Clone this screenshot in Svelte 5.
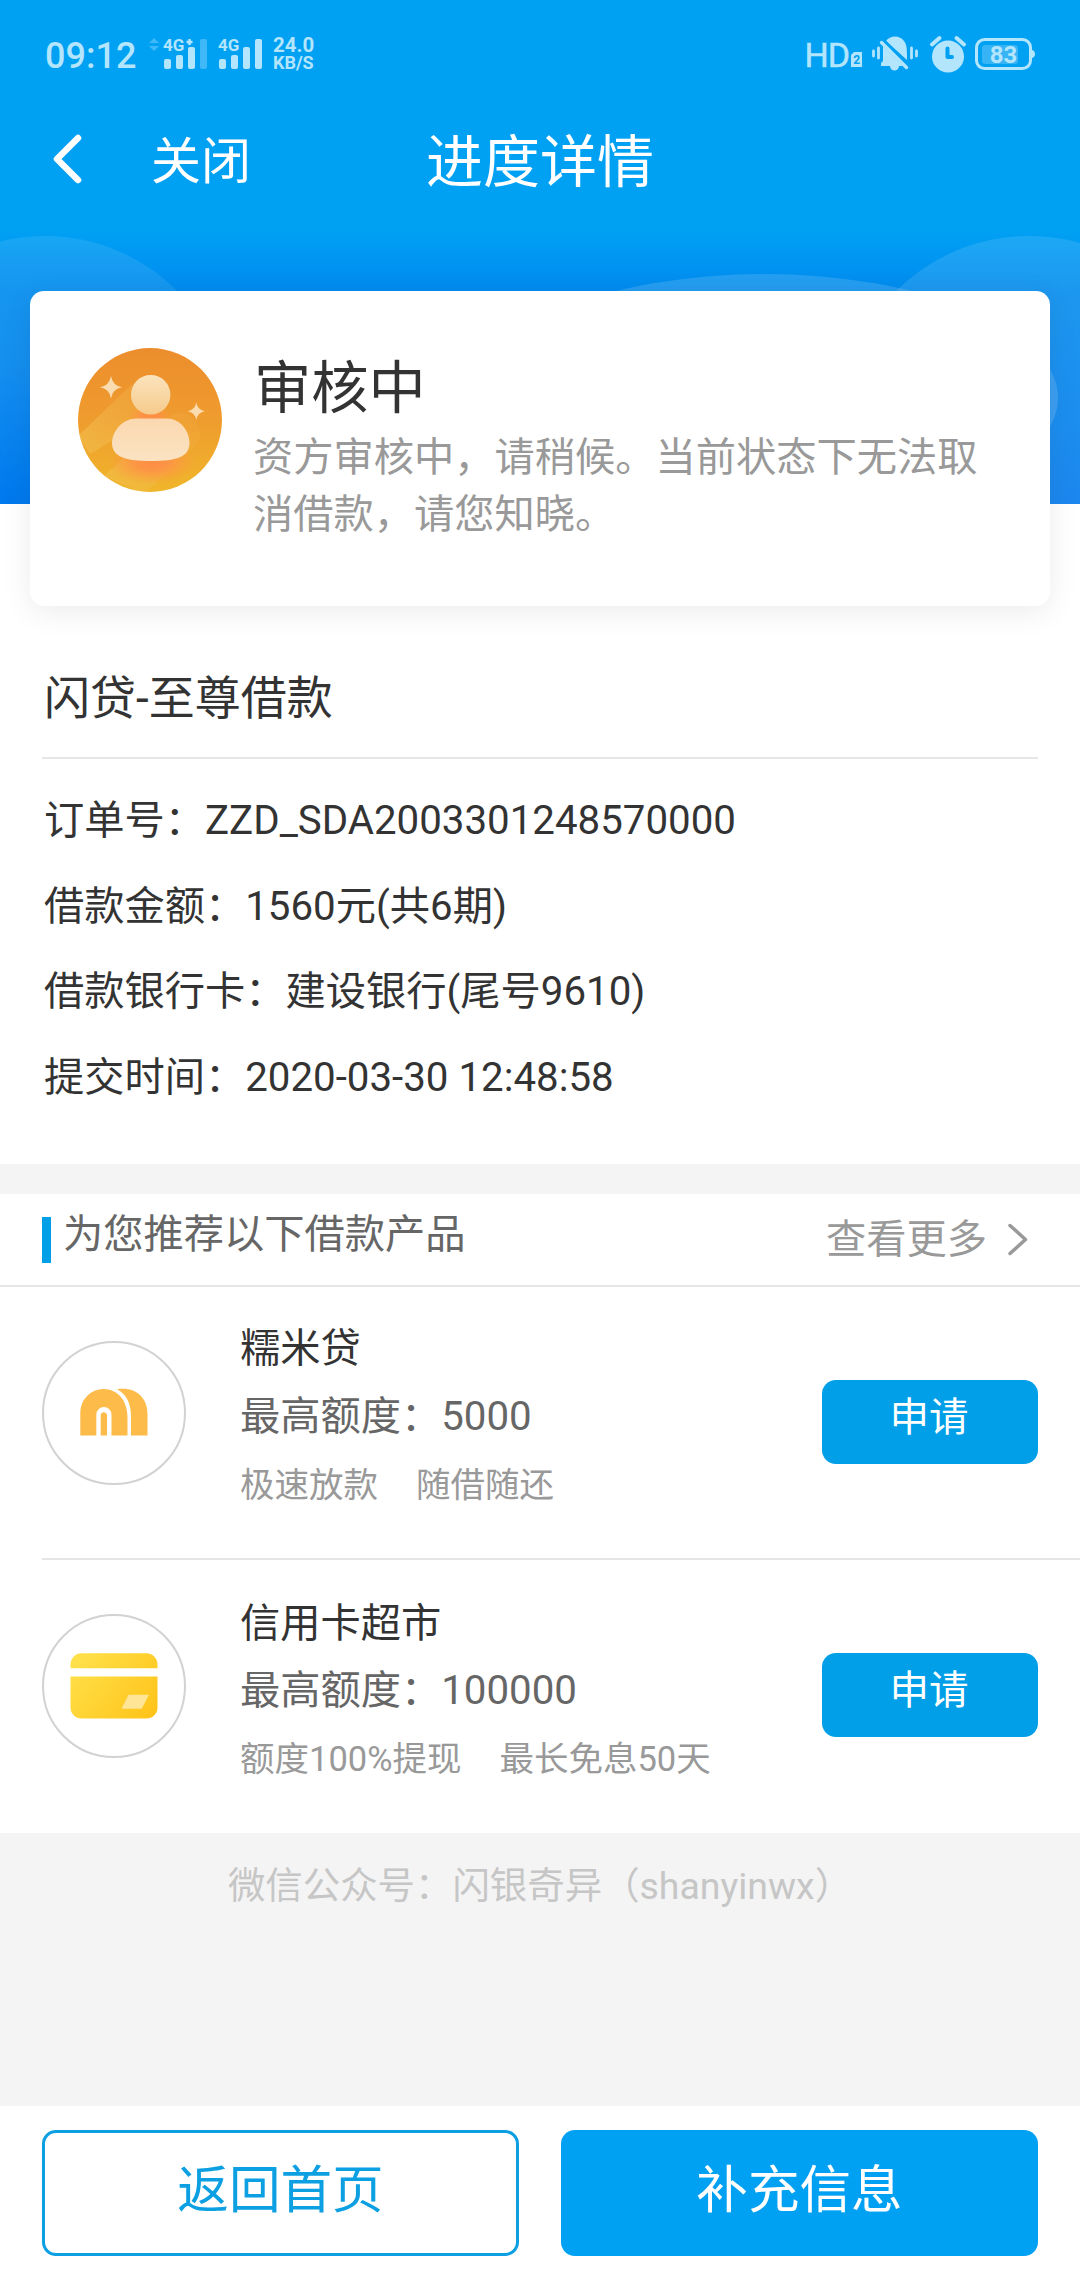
<script>
  const details = [
    { label: '订单号', value: 'ZZD_SDA2003301248570000' },
    { label: '借款金额', value: '1560元(共6期)' },
    { label: '借款银行卡', value: '建设银行(尾号9610)' },
    { label: '提交时间', value: '2020-03-30 12:48:58' }
  ];

  const products = [
    { icon: 'rice', name: '糯米贷', limit: '5000', tags: ['极速放款', '随借随还'] },
    { icon: 'card', name: '信用卡超市', limit: '100000', tags: ['额度100%提现', '最长免息50天'] }
  ];

  // Signal bars: x offset and top of each bar
  const bars = [
    [0, 20],
    [12, 16],
    [24, 8],
    [36, 0]
  ];
</script>

<main>
  <header>
    <svg class="waves" viewBox="0 0 1080 504" aria-hidden="true">
      <defs>
        <linearGradient id="fadeDown" x1="0" y1="0" x2="0" y2="1">
          <stop offset="0" stop-color="#fff" stop-opacity=".09" />
          <stop offset=".35" stop-color="#fff" stop-opacity=".08" />
          <stop offset=".7" stop-color="#fff" stop-opacity="0" />
        </linearGradient>
      </defs>
      <circle cx="45" cy="422" r="186" fill="url(#fadeDown)" />
      <circle cx="1029" cy="424" r="188" fill="#fff" fill-opacity=".11" />
      <ellipse cx="764" cy="398" rx="294" ry="124" fill="#fff" fill-opacity=".14" />
    </svg>

    <div class="status">
      <span class="time">09:12</span>
      <svg class="arrows" width="10" height="14" viewBox="0 0 10 14">
        <path d="M5 0l5 5H0zM5 13l5-5H0z" fill="currentColor" />
      </svg>
      <svg class="signal" width="44" height="32" viewBox="0 0 44 32">
        {#each bars as [x, top], i}
          <rect {x} y={top + 1} width="7" height={30 - top} rx="2" fill="currentColor" opacity={i === 3 ? 0.35 : 1} />
        {/each}
        <text x="-1" y="13">4G</text>
        <path d="M25.500 1v6M22.500 4h6" stroke="currentColor" stroke-width="2.500" />
      </svg>
      <svg class="signal second" width="44" height="32" viewBox="0 0 44 32">
        {#each bars as [x, top]}
          <rect {x} y={top + 1} width="7" height={30 - top} rx="2" fill="currentColor" />
        {/each}
        <text x="-1" y="13">4G</text>
      </svg>
      <div class="speed"><span>24.0</span><span class="unit">KB/S</span></div>

      <div class="right">
        <span class="hd">HD</span>
        <svg class="sim" width="11" height="15" viewBox="0 0 11 15">
          <path d="M3 0h8v15H0V3z" fill="currentColor" />
          <text x="2.200" y="12">2</text>
        </svg>
        <svg class="bell" width="46" height="36" viewBox="0 0 46 36">
          <path d="M1.500 15v5M6.500 12v10M39.500 12v10M44.500 15v5" stroke="currentColor" stroke-width="2.800" stroke-linecap="round" />
          <path d="M14 5C18-1 28-1 32 5c3 4 3 8 3 19z" fill="currentColor" />
          <path d="M11 10l20 20h-4a4.500 4.500 0 0 1-9 0H9v-3l2-2z" fill="currentColor" />
          <path d="M9.500 6.500L34.500 31.500" stroke="currentColor" stroke-width="3.400" stroke-linecap="round" />
          <path d="M12.500 4.500L37 29" stroke="#00a0f3" stroke-width="2" />
        </svg>
        <svg class="alarm" width="36" height="37" viewBox="0 0 36 37">
          <circle cx="18" cy="20.500" r="16" fill="currentColor" />
          <path d="M2 8.500L9.500 2M34 8.500L26.500 2" stroke="currentColor" stroke-width="4" stroke-linecap="round" />
          <path d="M17.500 12.500V21H22" fill="none" stroke="#00a0f3" stroke-width="4" stroke-linecap="round" stroke-linejoin="round" />
        </svg>
        <svg class="battery" width="60" height="34" viewBox="0 0 60 34">
          <rect x="1.500" y="2.500" width="54" height="29" rx="8" fill="none" stroke="currentColor" stroke-width="3" />
          <path d="M57 13c4 1 4 7 0 8z" fill="currentColor" />
          <rect x="7" y="8" width="36" height="19" rx="3" fill="currentColor" opacity=".3" />
          <text x="28.500" y="25.500">83</text>
        </svg>
      </div>
    </div>

    <nav>
      <div class="back">
        <svg width="32" height="52" viewBox="0 0 32 52">
          <path d="M26 5L5 26L26 47" fill="none" stroke="#fff" stroke-width="6.500" stroke-linecap="round" stroke-linejoin="round" />
        </svg>
        <span>关闭</span>
      </div>
      <h1>进度详情</h1>
    </nav>
  </header>

  <section class="card">
    <svg class="avatar" width="144" height="144" viewBox="0 0 144 144">
      <defs>
        <linearGradient id="orange" x1="0" y1="0" x2="0" y2="1">
          <stop offset="0" stop-color="#ec8d2d" />
          <stop offset=".5" stop-color="#ef9c2e" />
          <stop offset="1" stop-color="#f0b62b" />
        </linearGradient>
        <linearGradient id="beam" gradientUnits="userSpaceOnUse" x1="10" y1="110" x2="120" y2="60">
          <stop offset="0" stop-color="#f3c455" stop-opacity=".5" />
          <stop offset="1" stop-color="#f3b04a" stop-opacity=".15" />
        </linearGradient>
        <linearGradient id="head" x1="0" y1="0" x2="0" y2="1">
          <stop offset="0" stop-color="#fbe3bd" />
          <stop offset="1" stop-color="#f6cb8c" />
        </linearGradient>
        <linearGradient id="torso" x1="0" y1="0" x2="0" y2="1">
          <stop offset="0" stop-color="#fbd8b0" />
          <stop offset="1" stop-color="#fae3c2" />
        </linearGradient>
        <radialGradient id="glow">
          <stop offset="0" stop-color="#ff8a45" stop-opacity=".95" />
          <stop offset=".4" stop-color="#ff8f48" stop-opacity=".8" />
          <stop offset="1" stop-color="#ff9a45" stop-opacity="0" />
        </radialGradient>
        <clipPath id="disc"><circle cx="72" cy="72" r="72" /></clipPath>
      </defs>
      <g clip-path="url(#disc)">
        <rect width="144" height="144" fill="url(#orange)" />
        <path d="M0 88L54 36L86 62L12 106z" fill="url(#beam)" />
        <path d="M26 128L92 68C108 56 130 78 119 96L66 146z" fill="url(#beam)" />
        <ellipse cx="72" cy="68" rx="22" ry="11" fill="url(#glow)" />
        <ellipse cx="74" cy="114" rx="44" ry="22" fill="url(#glow)" />
      </g>
      <circle cx="72.700" cy="46.700" r="19.700" fill="url(#head)" />
      <path d="M58 70.500H89C102 70.500 111.500 83 111.500 95C111.500 109 98 113 73 113S34 109 34 95C34 83 45 70.500 58 70.500z" fill="url(#torso)" />
      <path d="M33 28Q34.500 37.500 44 39.300Q34.500 41 33 50.500Q31.500 41 22 39.300Q31.500 37.500 33 28z" fill="#fbdcb0" />
      <path d="M118.300 54.500Q119.500 62 127 63.300Q119.500 64.600 118.300 72Q117 64.600 109.500 63.300Q117 62 118.300 54.500z" fill="#fbdcb0" />
    </svg>
    <div class="state">
      <h2>审核中</h2>
      <p>资方审核中，请稍候。当前状态下无法取消借款，请您知晓。</p>
    </div>
  </section>

  <section class="order">
    <h3>闪贷-至尊借款</h3>
    <ul>
      {#each details as row}
        <li>{row.label}：{row.value}</li>
      {/each}
    </ul>
  </section>

  <section class="recommend">
    <div class="recommend-head">
      <i class="mark"></i>
      <span class="caption">为您推荐以下借款产品</span>
      <span class="more">查看更多</span>
      <svg class="chevron" width="22" height="36" viewBox="0 0 22 36">
        <path d="M3 3.500L18.500 17.500L3 31.500" fill="none" stroke="#999" stroke-width="3.500" stroke-linecap="round" stroke-linejoin="round" />
      </svg>
    </div>

    {#each products as product}
      <article>
        <div class="logo">
          {#if product.icon === 'rice'}
            <svg viewBox="0 0 144 144">
              <path d="M38.300 94.500V71.500A23.500 23.500 0 0 1 61.500 48C76 48 85.500 60 85.500 76V94.500H69.500V73.500A7.600 7.600 0 0 0 54.300 73.500V94.500z" fill="#fdbb4a" />
              <path d="M58.700 94.500V74A3.200 3.200 0 0 1 65 74V94.500z" fill="#fdbb4a" />
              <path d="M75 48.300C93 45.500 105.500 56 105.500 73V94.500H89V75C89 62 84 53 75 48.300z" fill="#fdbb4a" />
            </svg>
          {:else}
            <svg viewBox="0 0 144 144">
              <defs>
                <linearGradient id="gold" gradientUnits="userSpaceOnUse" x1="35" y1="45" x2="108" y2="104">
                  <stop offset="0" stop-color="#ffe049" />
                  <stop offset="1" stop-color="#ffc41a" />
                </linearGradient>
              </defs>
              <path d="M28.500 54.300V50A11 11 0 0 1 39.500 39.300H104.500A11 11 0 0 1 115.500 50V54.300z" fill="url(#gold)" />
              <path d="M28.500 62.500H115.500V93.500A11 11 0 0 1 104.500 104.500H39.500A11 11 0 0 1 28.500 93.500z" fill="url(#gold)" />
              <path d="M86.500 80.700H107L99.700 94.700H79.500z" fill="#ffe595" />
            </svg>
          {/if}
        </div>
        <div class="info">
          <h4>{product.name}</h4>
          <p class="limit">最高额度：{product.limit}</p>
          <p class="tags">
            {#each product.tags as tag}
              <span>{tag}</span>
            {/each}
          </p>
        </div>
        <button class="apply">申请</button>
      </article>
    {/each}
  </section>

  <p class="wechat">微信公众号：闪银奇异（shanyinwx）</p>

  <footer>
    <button class="outline">返回首页</button>
    <button class="solid">补充信息</button>
  </footer>
</main>

<style>
  :global(body) {
    margin: 0;
    background: #f4f4f4;
  }

  main {
    display: flex;
    flex-direction: column;
    width: 1080px;
    height: 2280px;
    overflow: hidden;
    background: #f4f4f4;
    color: #333;
    font-family: Roboto, "Noto Sans CJK SC", sans-serif;
    font-size: 40.25px;
  }

  h1, h2, h3, h4, p, ul {
    margin: 0;
    padding: 0;
    font-weight: 400;
  }

  ul {
    list-style: none;
  }

  svg {
    display: block;
    flex: none;
    overflow: visible;
  }

  button {
    box-sizing: border-box;
    border: 0;
    padding: 0;
    font-family: inherit;
  }

  header {
    position: relative;
    flex: none;
    height: 504px;
    background: linear-gradient(#00a0f3 232px, #0097f2 255px, #008bee 291px, #0079ee 504px);
  }

  .waves {
    position: absolute;
    inset: 0;
    width: 1080px;
    height: 504px;
    overflow: hidden;
  }

  .status {
    position: relative;
    display: flex;
    align-items: center;
    height: 108px;
    padding: 0 45px 0 45px;
    color: #b3e5fd;
    font-weight: 500;
  }

  .time {
    width: 104px;
    font-size: 36px;
    line-height: 42px;
    padding-top: 3px;
  }

  .arrows {
    margin-bottom: 18px;
    opacity: .35;
  }

  .signal {
    margin-left: 5px;
  }

  .signal.second {
    margin-left: 11px;
  }

  .signal text {
    font-size: 17px;
    font-weight: 700;
    fill: currentColor;
  }

  .speed {
    display: flex;
    flex-direction: column;
    margin-left: 10px;
    font-size: 20.5px;
    font-weight: 700;
    line-height: 17px;
  }

  .unit {
    font-size: 18px;
  }

  .right {
    display: flex;
    align-items: center;
    margin-left: auto;
  }

  .hd {
    padding-top: 2px;
    font-size: 34px;
    font-weight: 400;
    letter-spacing: -1px;
    line-height: 40px;
    -webkit-text-stroke: .5px currentColor;
  }

  .sim {
    margin: 11px 10px 0 2px;
  }

  .sim text {
    font-size: 12px;
    font-weight: 700;
    fill: #00a0f3;
  }

  .alarm {
    margin: 0 9px 0 12px;
  }

  .battery text {
    font-size: 24px;
    font-weight: 700;
    text-anchor: middle;
    fill: currentColor;
  }

  nav {
    position: relative;
    display: grid;
    grid-template-columns: 1fr auto 1fr;
    align-items: center;
    height: 108px;
    color: #fff;
  }

  .back {
    display: flex;
    align-items: center;
    gap: 67px;
    padding-left: 52px;
    font-size: 50px;
    line-height: 60px;
  }

  .back svg {
    margin-bottom: 6px;
  }

  h1 {
    padding-top: 1px;
    font-size: 57px;
    line-height: 68px;
  }

  .order,
  .recommend {
    background: #fff;
  }

  .card {
    position: relative;
    box-sizing: border-box;
    display: flex;
    flex: none;
    gap: 32px;
    height: 315px;
    margin: -213px 30px 0;
    padding: 57px 48px 0;
    border-radius: 14px;
    background: #fff;
    box-shadow: 0 6px 30px rgba(0, 0, 0, .08);
  }

  .state {
    padding-top: 1px;
  }

  h2 {
    font-size: 57.2px;
    line-height: 80px;
  }

  .state p {
    width: 728px;
    margin-left: -1px;
    color: #999;
    line-height: 57px;
  }

  /* White panel slides up behind the status card */
  .order {
    box-sizing: border-box;
    height: 660px;
    margin-top: -102px;
    padding: 152px 42px 0;
  }

  h3 {
    box-sizing: border-box;
    height: 103px;
    padding: 12px 2px 0;
    border-bottom: 2px solid #e6e6e6;
    font-size: 46px;
    line-height: 60px;
  }

  .order ul {
    padding: 19px 2px 0;
  }

  li {
    height: 85.7px;
    line-height: 86px;
  }

  .recommend {
    margin-top: 30px;
  }

  .recommend-head {
    box-sizing: border-box;
    display: flex;
    align-items: center;
    height: 93px;
    padding: 0 51px 0 42px;
    border-bottom: 2px solid #e6e6e6;
  }

  .mark {
    width: 9px;
    height: 46px;
    background: #009fe8;
  }

  .caption {
    margin: 0 auto 10px 12px;
    color: #666;
    line-height: 50px;
  }

  .more {
    color: #999;
    line-height: 50px;
  }

  .chevron {
    margin-left: 20px;
  }

  article {
    box-sizing: border-box;
    display: flex;
    height: 271px;
    margin-left: 42px;
    padding-right: 42px;
  }

  article + article {
    height: 275px;
    border-top: 2px solid #e6e6e6;
  }

  .logo {
    box-sizing: border-box;
    width: 144px;
    height: 144px;
    margin-top: 54px;
    border: 2px solid #d2d2d2;
    border-radius: 50%;
  }

  .logo svg {
    width: 144px;
    height: 144px;
    margin: -2px;
  }

  .info {
    flex: 1;
    margin: 32px 0 0 54px;
  }

  article + article .info {
    margin-top: 34px;
  }

  h4 {
    font-size: 40.25px;
    line-height: 60px;
  }

  .limit {
    padding-top: 8px;
    color: #666;
    line-height: 60px;
  }

  .tags {
    display: flex;
    gap: 38px;
    padding-top: 13px;
    color: #999;
    font-size: 34.5px;
    line-height: 50px;
  }

  article + article .limit {
    padding-top: 7px;
  }

  .apply {
    width: 216px;
    height: 84px;
    margin-top: 93px;
    padding: 0 2px 18px 0;
    border-radius: 14px;
    background: #009fe8;
    color: #fff;
    font-size: 39.5px;
  }

  .wechat {
    flex: 1;
    padding-top: 26px;
    color: #c6c6c6;
    font-size: 37.44px;
    line-height: 54px;
    text-align: center;
  }

  footer {
    box-sizing: border-box;
    display: flex;
    justify-content: space-between;
    height: 174px;
    padding: 24px 42px;
    background: #fff;
  }

  footer button {
    width: 477px;
    height: 126px;
    padding-bottom: 16px;
    border-radius: 14px;
    font-size: 51.6px;
  }

  .outline {
    border: 3px solid #0c9fe2;
    background: #fff;
    color: #0c9fe2;
  }

  .solid {
    background: #00a0f2;
    color: #fff;
  }
</style>
